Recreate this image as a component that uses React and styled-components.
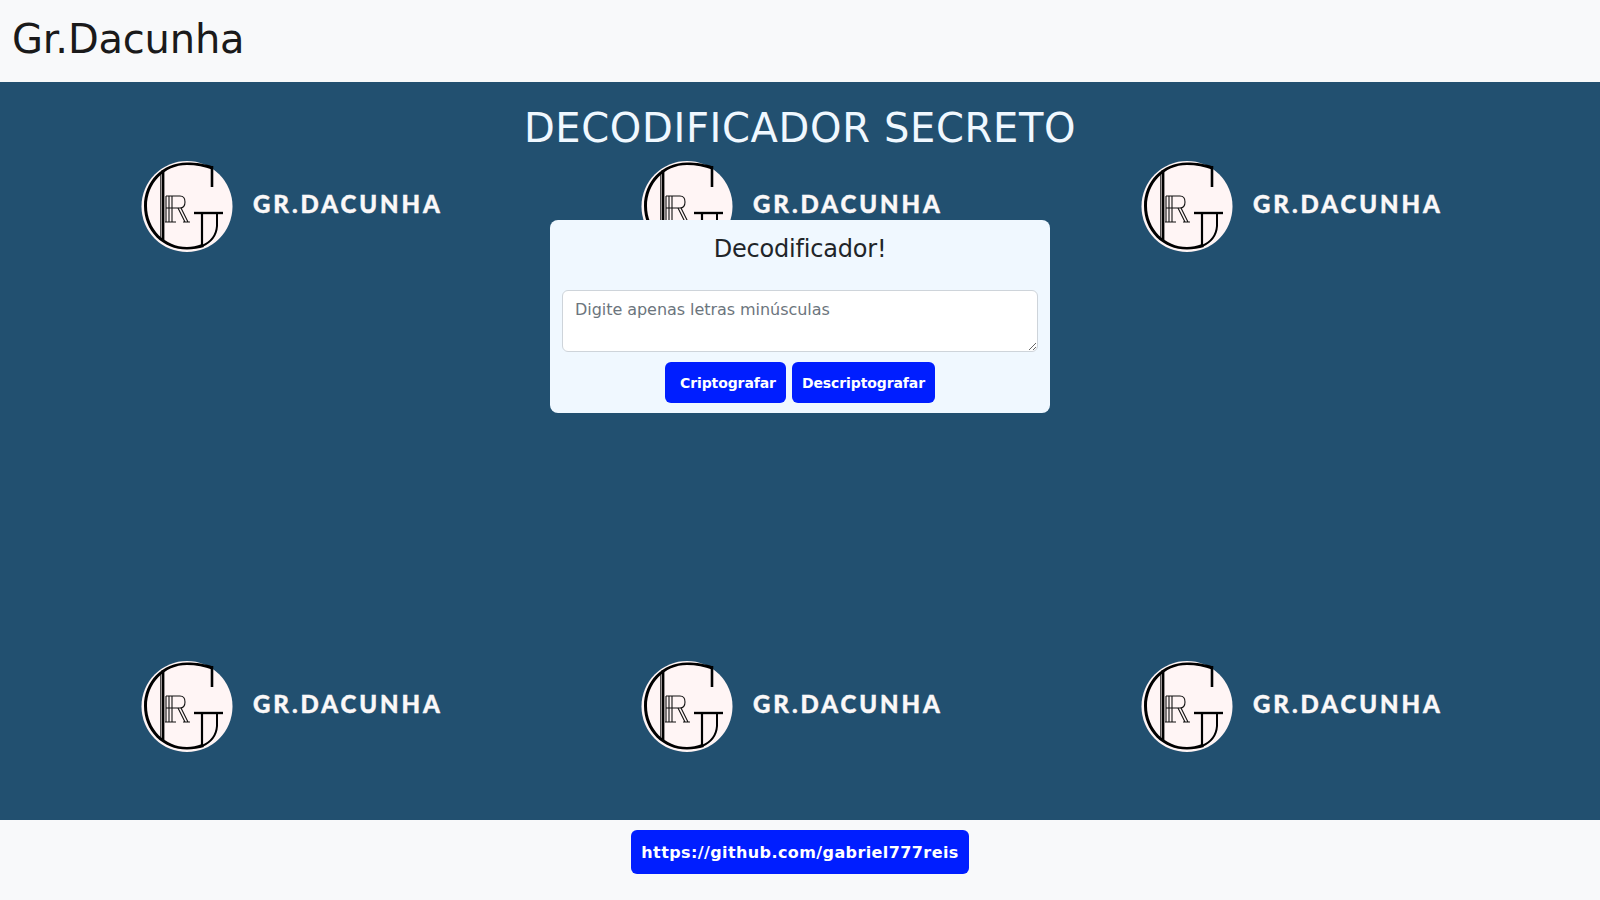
import React from 'react';
import styled, { createGlobalStyle } from 'styled-components';

const GlobalStyle = createGlobalStyle`
	html, body {
		margin: 0;
		padding: 0;
		height: 100%;
	}
	body {
		font-family: "DejaVu Sans", sans-serif;
		font-size: 16px;
		color: #212529;
		background: #f8f9fa;
	}
	* {
		box-sizing: border-box;
	}
`;

const Page = styled.div`
	display: flex;
	flex-direction: column;
	height: 900px;
	overflow: hidden;
`;

const Navbar = styled.header`
	flex: none;
	height: 82px;
	padding: 0 12px;
	display: flex;
	align-items: center;
	background: #f8f9fa;
`;

const Brand = styled.a`
	font-size: 40px;
	line-height: 48px;
	letter-spacing: -0.2px;
	margin-top: -5px;
	color: #1a1a1a;
`;

const Main = styled.main`
	position: relative;
	flex: 1;
	overflow: hidden;
	background: #225070;
	display: flex;
	flex-direction: column;
	align-items: center;
`;

const LogoWall = styled.div`
	position: absolute;
	inset: 0;
	display: grid;
	grid-template-columns: repeat(3, 500px);
	grid-auto-rows: 500px;
`;

const Tile = styled.div`
	display: flex;
	align-items: flex-start;
	padding: 68px 0 0 130px;
`;

const LogoText = styled.span`
	margin: 39px 0 0 13px;
	font-family: Lato, sans-serif;
	font-weight: 900;
	font-size: 24px;
	line-height: 30px;
	letter-spacing: 2.95px;
	-webkit-text-stroke: 0.4px #fbf8f8;
	color: #fbf8f8;
	white-space: nowrap;
`;

const Title = styled.h1`
	position: relative;
	margin: 22px 0 0;
	font-size: 40px;
	font-weight: 400;
	line-height: 48px;
	letter-spacing: 0.65px;
	color: #f0f8ff;
`;

const Card = styled.section`
	position: relative;
	width: 500px;
	margin-top: 68px;
	padding: 15px 12px 10px;
	border-radius: 8px;
	background: #f0f8ff;
	display: flex;
	flex-direction: column;
	align-items: center;
`;

const CardTitle = styled.h4`
	margin: 0 0 26px;
	font-size: 24px;
	font-weight: 400;
	line-height: 29px;
	letter-spacing: -0.2px;
	color: #212529;
`;

const Message = styled.textarea`
	display: block;
	width: 476px;
	height: 62px;
	padding: 7px 12px 5px;
	border: 1px solid #ced4da;
	border-radius: 6px;
	background: #fff;
	font-family: inherit;
	font-size: 16px;
	line-height: 24px;
	letter-spacing: -0.05px;
	color: #212529;
	outline: none;

	&::placeholder {
		color: #6c757d;
		opacity: 1;
	}
`;

const Actions = styled.div`
	display: flex;
	gap: 6px;
	margin-top: 10px;
`;

const ActionButton = styled.button`
	height: 41px;
	padding: 0 10px 0 ${props => props.$wide ? '15px' : '10px'};
	border: 0;
	border-radius: 6px;
	background: #001eff;
	color: #fff;
	font-family: inherit;
	font-size: 14px;
	font-weight: 700;
	letter-spacing: -0.1px;
`;

const Footer = styled.footer`
	flex: none;
	height: 80px;
	padding-top: 10px;
	display: flex;
	justify-content: center;
	align-items: flex-start;
	background: #f8f9fa;
`;

const RepoLink = styled.a`
	display: flex;
	align-items: center;
	height: 44px;
	padding: 0 10px;
	border-radius: 6px;
	background: #001eff;
	color: #fff;
	font-size: 16px;
	font-weight: 700;
	letter-spacing: 0.4px;
	text-decoration: none;
`;

const LogoMark = () => (
	<svg width="110" height="110" viewBox="0 0 110 110" fill="none" aria-hidden="true">
		<circle cx="57" cy="56.5" r="45.5" fill="#fff5f5" />
		<path d="M83 16.5 C76 14 66 12.5 57 12.5 C32 12.5 14 32 14 56 C14 81 33 99.5 57 99.5 C63 99.5 69 98.5 74 97 L72 94 C67 96 62 97 57 97 C35 97 17 79 17 56 C17 34 34 15 57 15 C66 15 75 17 82 19.5 Z" fill="#000" />
		<path d="M82 16 V37" stroke="#000" strokeWidth="2.6" />
		<path d="M33 20 V90" stroke="#000" strokeWidth="2.8" />
		<path d="M30.5 22 V87" stroke="#000" strokeWidth="0.7" />
		<path d="M64 63 H93" stroke="#000" strokeWidth="2.4" />
		<path d="M72 63 V96" stroke="#000" strokeWidth="2.2" />
		<path d="M87 63 V76 Q86 90 72 96" stroke="#000" strokeWidth="2" />
		<g stroke="#111" strokeWidth="1.1">
			<path d="M36 46 H50 Q55 46 55 52 Q55 58 50 58 H36" />
			<path d="M36 46 V72 M39 46 V72 M42 46 V72 M35 72 H46" />
			<path d="M48 58 L55 72 M51 58 L58 72 M53 72 H60" />
		</g>
	</svg>
);

const tiles = [0, 1, 2, 3, 4, 5];

const App = () => (
	<Page>
		<GlobalStyle />
		<Navbar>
			<Brand>Gr.Dacunha</Brand>
		</Navbar>
		<Main>
			<LogoWall>
				{tiles.map(tile => (
					<Tile key={tile}>
						<LogoMark />
						<LogoText>GR.DACUNHA</LogoText>
					</Tile>
				))}
			</LogoWall>
			<Title>DECODIFICADOR SECRETO</Title>
			<Card>
				<CardTitle>Decodificador!</CardTitle>
				<Message placeholder="Digite apenas letras minúsculas" />
				<Actions>
					<ActionButton $wide>Criptografar</ActionButton>
					<ActionButton>Descriptografar</ActionButton>
				</Actions>
			</Card>
		</Main>
		<Footer>
			<RepoLink href="#">https://github.com/gabriel777reis</RepoLink>
		</Footer>
	</Page>
);

export default App;
